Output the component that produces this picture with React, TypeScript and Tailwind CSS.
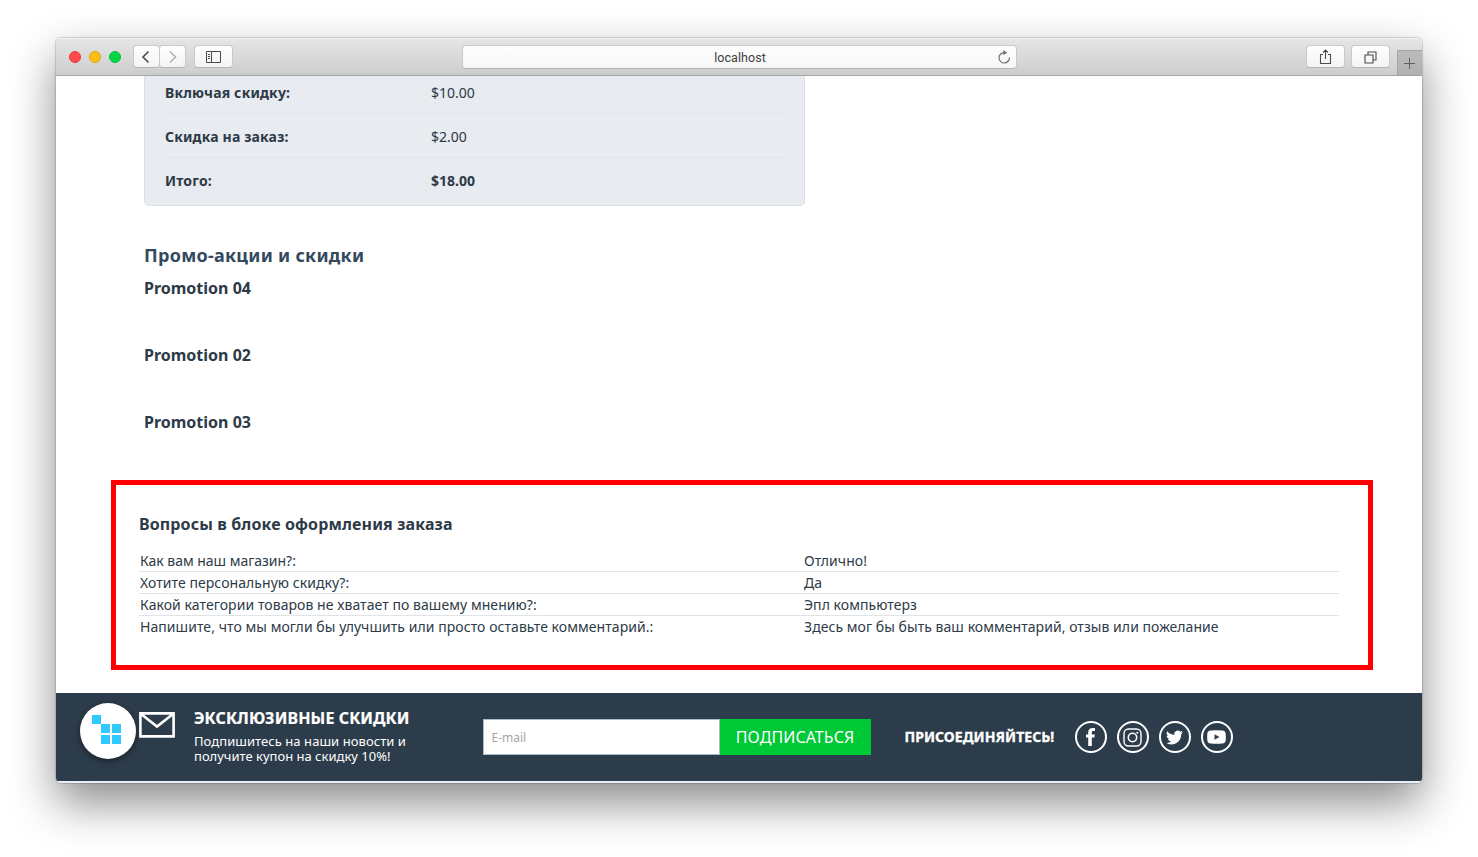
import React from "react";

const totals = [
  { label: "Включая скидку:", value: "$10.00", bold: false },
  { label: "Скидка на заказ:", value: "$2.00", bold: false },
  { label: "Итого:", value: "$18.00", bold: true },
];

const promotions = ["Promotion 04", "Promotion 02", "Promotion 03"];

const answers = [
  ["Как вам наш магазин?:", "Отлично!"],
  ["Хотите персональную скидку?:", "Да"],
  ["Какой категории товаров не хватает по вашему мнению?:", "Эпл компьютерз"],
  [
    "Напишите, что мы могли бы улучшить или просто оставьте комментарий.:",
    "Здесь мог бы быть ваш комментарий, отзыв или пожелание",
  ],
];

const toolButton =
  "flex h-[23px] items-center justify-center rounded-[4px] border border-[#c9c9c9] border-b-[#b4b4b4] bg-linear-to-b from-[#fefefe] to-[#f4f4f4] text-[#4a4a4a]";

function Toolbar() {
  return (
    <div className="flex h-[38px] shrink-0 border-b border-[#a3a3a3] bg-linear-to-b from-[#e6e6e6] to-[#cdcdcd] shadow-[inset_0_1px_0_#f3f3f3]">
      <div className="flex w-[406px] items-center pl-[13px]">
        <div className="flex gap-2">
          <span className="size-3 rounded-full border border-[#e0383e] bg-[#ff4a4c]" />
          <span className="size-3 rounded-full border border-[#e2a116] bg-[#ffbe12]" />
          <span className="size-3 rounded-full border border-[#10b83a] bg-[#04d644]" />
        </div>
        <div className="ml-3 flex">
          <button className={toolButton + " w-[27px] pr-px"}>
            <svg width="10" height="14" viewBox="0 0 10 14" fill="none" stroke="#4a4a4a" strokeWidth="1.600">
              <path d="M7.500 1.500 2 7 7.500 12.500" />
            </svg>
          </button>
          <button className={toolButton + " -ml-px w-[27px]"}>
            <svg width="10" height="14" viewBox="0 0 10 14" fill="none" stroke="#b0b0b0" strokeWidth="1.600">
              <path d="M2 1.500 7.500 7 2 12.500" />
            </svg>
          </button>
        </div>
        <button className={toolButton + " ml-2 w-[39px]"}>
          <svg width="15" height="12" viewBox="0 0 15 12" fill="none" stroke="#4a4a4a">
            <path d="M.5.5h14v11H.5zM5.500.5v11M2 3.500h2M2 5.500h2M2 7.500h2" />
          </svg>
        </button>
      </div>
      <div className="mt-[7px] flex h-6 w-[555px] items-center rounded-[4px] border border-[#c9c9c9] border-b-[#b4b4b4] bg-linear-to-b from-[#fdfdfd] to-[#f7f7f7]">
        <span className="w-5" />
        <span className="flex-1 pt-[2px] text-center font-[Roboto,sans-serif] text-[12.500px] tracking-[0.05px] text-[#404040]">localhost</span>
        <svg className="mr-[5px]" width="14" height="14" viewBox="0 0 14 14" fill="none" stroke="#707070" strokeWidth="1.200">
          <path d="M12.400 7.500A5.200 5.200 0 1 1 7 2.600h1" />
          <path d="M6.300 0v5l4-2.300z" fill="#707070" stroke="none" />
        </svg>
      </div>
      <div className="flex flex-1 items-center justify-end pr-[7px]">
        <button className={toolButton + " w-[39px]"}>
          <svg width="13" height="16" viewBox="0 0 13 16" fill="none" stroke="#4a4a4a" strokeWidth="1.100">
            <path d="M4 5.500H1.500v9h10v-9H9M6.500 10V1M4 3.500 6.500 1 9 3.500" />
          </svg>
        </button>
        <button className={toolButton + " ml-[6px] w-[39px] pt-px"}>
          <svg width="13" height="13" viewBox="0 0 13 13" fill="none" stroke="#4a4a4a" strokeWidth="1.100">
            <path d="M1 4h8v8H1zM4 4V1h8v8H9" />
          </svg>
        </button>
      </div>
      <div className="mt-3 flex w-[25px] items-center justify-center border-l border-t border-[#a6a6a6] bg-linear-to-b from-[#bbbbbb] to-[#b1b1b1] pr-px">
        <svg width="11" height="11" viewBox="0 0 11 11" stroke="#606060">
          <path d="M5.500 0v11M0 5.500h11" />
        </svg>
      </div>
    </div>
  );
}

function Totals() {
  return (
    <section className="h-[130px] w-[661px] shrink-0 rounded-b-[5px] border border-t-0 border-[#d9e1e9] bg-[#e8ebf0] px-5">
      {totals.map((row, i) => (
        <div
          key={row.label}
          className={
            "flex text-[14px] leading-5 " +
            (i === 0 ? "h-[38px] pt-[7px] " : "h-[44px] pt-[13px] ") +
            (i < 2 ? "border-b border-[#e0e5e9]" : "")
          }
        >
          <span className="w-[266px] font-bold tracking-[0.17px]">{row.label}</span>
          <span className={row.bold ? "font-bold" : ""}>{row.value}</span>
        </div>
      ))}
    </section>
  );
}

function Questions() {
  return (
    <section className="mt-[3px] ml-[55px] h-[190px] w-[1262px] shrink-0 border-[5px] border-[#ff0000] pt-[27px] pl-[23px]">
      <h3 className="text-[16px] leading-6 font-bold tracking-[0.13px]">Вопросы в блоке оформления заказа</h3>
      <div className="mt-[14px] w-[1200px]">
        {answers.map(([question, answer], i) => (
          <div
            key={question}
            className={
              "flex h-[22px] pl-px text-[14px] leading-[21px] " + (i < 3 ? "border-b border-[#e0e4e6]" : "")
            }
          >
            <span className={"w-[664px] " + (i === 0 ? "tracking-[-0.030px]" : "tracking-[0.060px]")}>{question}</span>
            <span className="tracking-[0.050px]">{answer}</span>
          </div>
        ))}
      </div>
    </section>
  );
}

const ring = "flex size-8 items-center justify-center rounded-full border-2 border-white";

function Footer() {
  return (
    <footer className="mt-[23px] flex h-[88px] shrink-0 bg-[#2c3c4a] text-white">
      <div className="mt-[10px] ml-6 flex size-14 items-center justify-center rounded-full bg-white shadow-[0_2px_6px_rgba(0,0,0,0.45)]">
        <svg width="56" height="56" viewBox="0 0 56 56" fill="#2fc8ff">
          <path d="M12 12h9v9h-9zM21 21h9v9h-9zM32 21h9v9h-9zM21 32h9v9h-9zM32 32h9v9h-9z" />
        </svg>
      </div>
      <svg className="mt-[19px] ml-[3px]" width="36" height="26" viewBox="0 0 36 26" fill="none" stroke="#fff" strokeWidth="2.600">
        <path d="M1.400 1.400h33.200v23H1.400zM2 2l16 12.500L34 2" />
      </svg>
      <div className="mt-[13px] ml-[19px] w-[289px]">
        <div className="text-[16px] leading-6 font-bold tracking-[0.100px] whitespace-nowrap [-webkit-text-stroke:0.2px_white]">ЭКСКЛЮЗИВНЫЕ СКИДКИ</div>
        <div className="mt-[4px] text-[13px] leading-[15px]">
          <span className="tracking-[0.060px]">Подпишитесь на наши новости и</span>
          <br />
          получите купон на скидку 10%!
        </div>
      </div>
      <div className="mt-[26px] flex h-9">
        <input
          placeholder="E-mail"
          className="w-[237px] border border-[#a9bccb] bg-white px-[7.500px] pt-px text-[12px] placeholder:text-[#a5a5a5]"
        />
        <button className="w-[151px] bg-[#00c937] pr-px text-[16px] tracking-[0.080px]">ПОДПИСАТЬСЯ</button>
      </div>
      <div className="mt-[32px] ml-[33.500px] w-[170.500px] text-[14px] leading-6 font-bold tracking-[0.040px] whitespace-nowrap [-webkit-text-stroke:0.3px_white]">
        ПРИСОЕДИНЯЙТЕСЬ!
      </div>
      <div className="mt-7 flex gap-[10px]">
        <span className={ring}>
          <svg width="10" height="18" viewBox="0 0 10 18" fill="#fff">
            <path d="M2.200 18V9.500H0V6.500h2.200V4.500C2.200 1.600 3.700 0 6.400 0H9v3H7.200C6.200 3 5.800 3.400 5.800 4.400v2.100h3l-.4 3H5.800V18z" />
          </svg>
        </span>
        <span className={ring + " pr-px"}>
          <svg width="19" height="19" viewBox="0 0 19 19" fill="none" stroke="#fff" strokeWidth="1.400">
            <rect x="1" y="1" width="17" height="17" rx="4.500" />
            <circle cx="9.500" cy="9.500" r="4.200" strokeWidth="1.600" />
            <circle cx="14.300" cy="4.700" r="1" fill="#fff" stroke="none" />
          </svg>
        </span>
        <span className={ring + " pr-px"}>
          <svg width="17" height="17" viewBox="0 0 24 24" fill="#fff">
            <path d="M23.950 4.570a10 10 0 0 1-2.820.770 4.960 4.960 0 0 0 2.160-2.720 9.900 9.900 0 0 1-3.120 1.180 4.920 4.920 0 0 0-8.380 4.480C7.690 8.090 4.070 6.130 1.640 3.160a4.820 4.820 0 0 0-.670 2.480c0 1.710.870 3.210 2.190 4.100a4.900 4.900 0 0 1-2.230-.620v.060a4.920 4.920 0 0 0 3.950 4.830 5 5 0 0 1-2.210.080 4.940 4.940 0 0 0 4.600 3.420A9.870 9.870 0 0 1 0 19.540a13.900 13.900 0 0 0 7.550 2.210c9.050 0 14-7.500 14-13.980 0-.210 0-.420-.020-.630a9.900 9.900 0 0 0 2.420-2.570z" />
          </svg>
        </span>
        <span className={ring + " pr-px"}>
          <svg width="19" height="14" viewBox="0 0 19 14" fill="#fff" fillRule="evenodd">
            <path d="M4 .5Q9.500 0 15 .5C17.800.7 18.500 1.700 18.700 4q.3 3 0 6c-.2 2.300-.9 3.300-3.700 3.500Q9.500 14 4 13.500C1.200 13.300.5 12.300.3 10q-.3-3 0-6C.5 1.700 1.200.7 4 .5zM7.500 4.300v5.400l5-2.700z" />
          </svg>
        </span>
      </div>
    </footer>
  );
}

export default function App() {
  return (
    <div className="h-[857px] w-[1478px] overflow-hidden bg-white pt-[38px] pl-[56px] font-['Noto_Sans',sans-serif] text-[#2d3a47]">
      <div className="h-[745px] w-[1366px] rounded-[5px] shadow-[0_0_1px_1px_rgba(0,0,0,0.16),0_20px_46px_rgba(0,0,0,0.46)]">
        <div className="flex h-full flex-col overflow-hidden rounded-[5px] bg-white">
          <Toolbar />
          <div className="flex flex-col pl-[88px]">
            <Totals />
            <h2 className="mt-[36px] text-[18px] leading-[26px] font-bold tracking-[0.270px] text-[#34495e]">Промо-акции и скидки</h2>
            <div className="mt-[8px]">
              {promotions.map((name) => (
                <h3 key={name} className="h-[67px] text-[16px] leading-6 font-bold">
                  {name}
                </h3>
              ))}
            </div>
          </div>
          <Questions />
          <Footer />
          <div className="h-[2px] shrink-0 bg-[#e9edf5]" />
        </div>
      </div>
    </div>
  );
}
